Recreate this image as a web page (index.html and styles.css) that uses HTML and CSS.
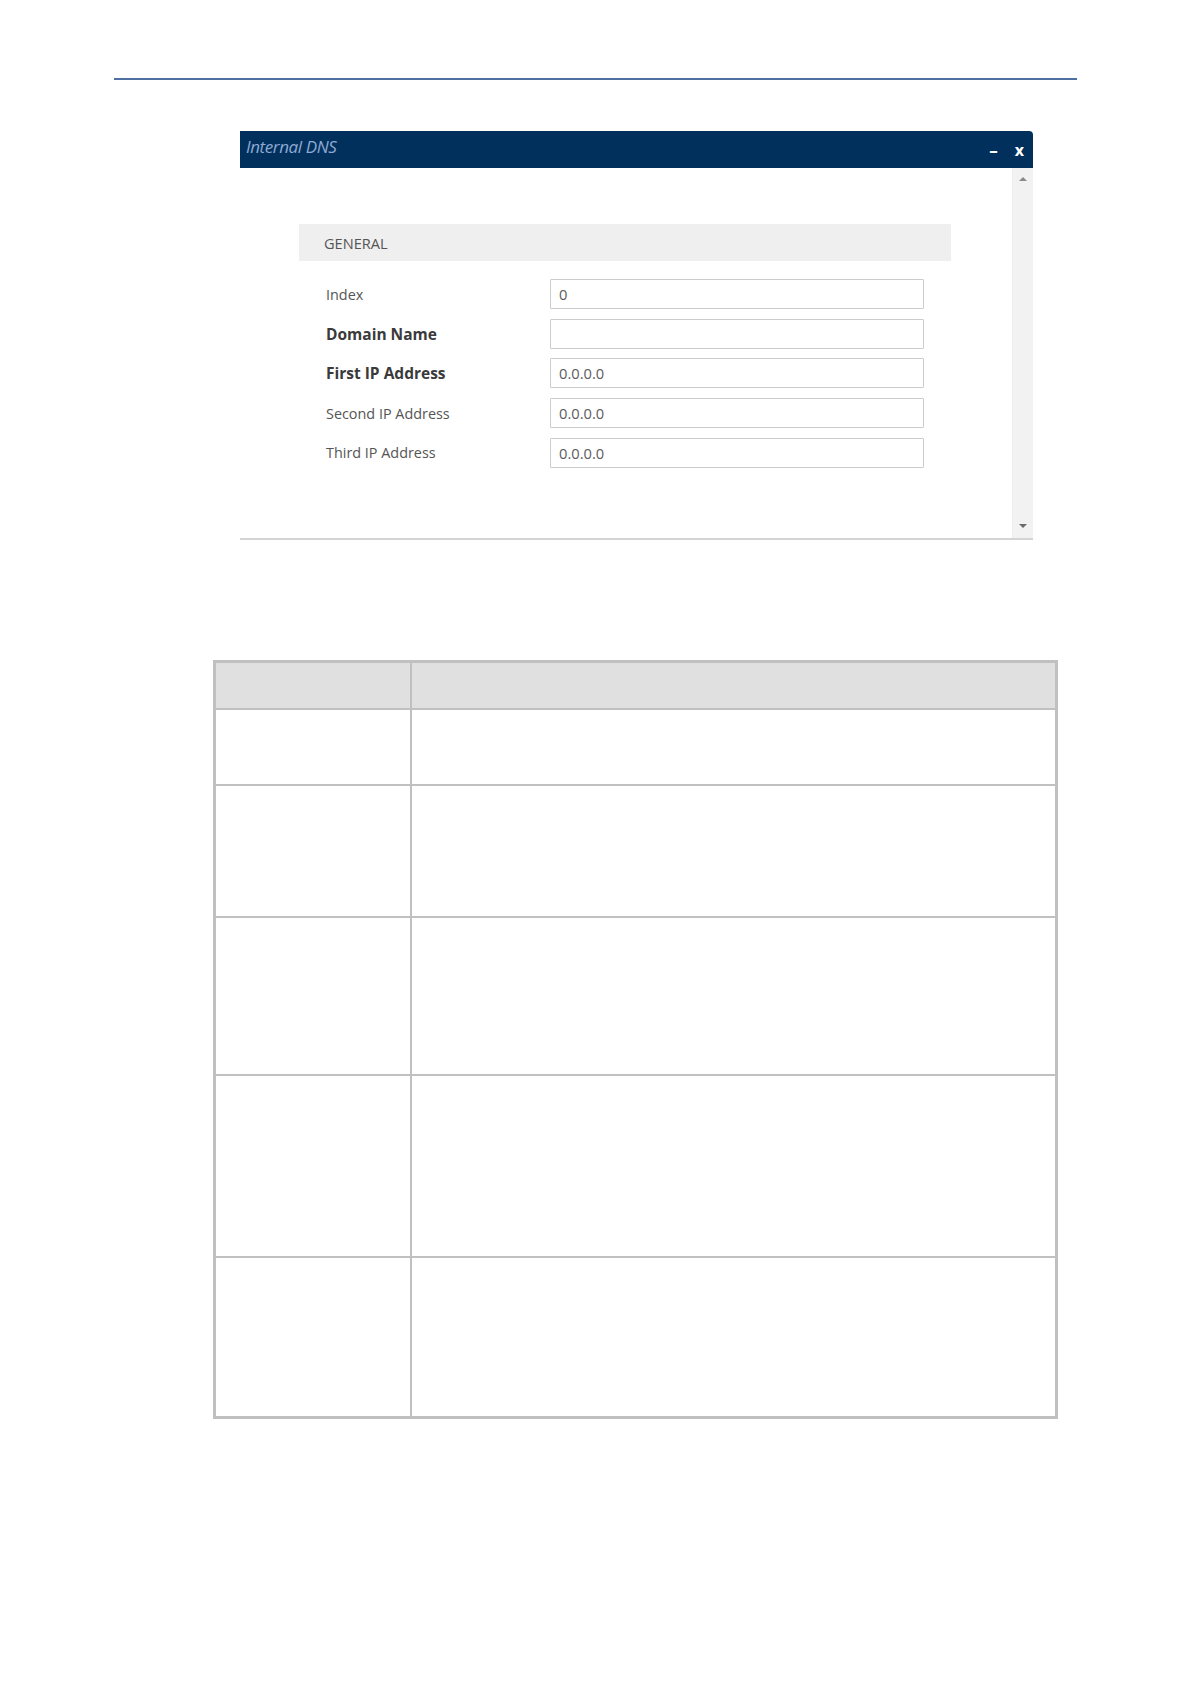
FILE: index.html
```html
<!DOCTYPE html>
<html lang="en">
<head>
<meta charset="utf-8">
<title>Internal DNS</title>
<link rel="stylesheet" href="styles.css">
</head>
<body>
<div class="page">
  <div class="rule"></div>

  <div class="dialog">
    <div class="titlebar">
      <span class="title">Internal DNS</span>
      <div class="controls">
        <span class="ctl min">&ndash;</span>
        <span class="ctl close">x</span>
      </div>
    </div>
    <div class="body">
      <div class="content">
        <div class="section">GENERAL</div>
        <div class="form">
          <div class="row"><label class="lbl">Index</label><div class="input">0</div></div>
          <div class="row"><label class="lbl bold">Domain Name</label><div class="input"></div></div>
          <div class="row"><label class="lbl bold">First IP Address</label><div class="input">0.0.0.0</div></div>
          <div class="row"><label class="lbl">Second IP Address</label><div class="input">0.0.0.0</div></div>
          <div class="row"><label class="lbl">Third IP Address</label><div class="input">0.0.0.0</div></div>
        </div>
      </div>
      <div class="scrollbar">
        <span class="arrow up"></span>
        <span class="arrow down"></span>
      </div>
    </div>
  </div>

  <table class="grid">
    <tr class="head"><th class="c1"></th><th class="c2"></th></tr>
    <tr class="r1"><td></td><td></td></tr>
    <tr class="r2"><td></td><td></td></tr>
    <tr class="r3"><td></td><td></td></tr>
    <tr class="r4"><td></td><td></td></tr>
    <tr class="r5"><td></td><td></td></tr>
  </table>
</div>
</body>
</html>
```

FILE: styles.css
```css
html, body {
  margin: 0;
  padding: 0;
  background: #ffffff;
}

.page {
  width: 1191px;
  height: 1684px;
  padding-top: 78px;
  box-sizing: border-box;
  font-family: "Open Sans", "Noto Sans", sans-serif;
}

.rule {
  margin-left: 114px;
  width: 963px;
  height: 2px;
  background: #4d70a1;
}

.dialog {
  margin-left: 240px;
  margin-top: 51px;
  width: 793px;
}

.titlebar {
  height: 37px;
  background: #02305d;
  border-top-right-radius: 4px;
  display: flex;
  align-items: center;
  justify-content: space-between;
  padding-left: 6px;
  padding-right: 9px;
}

.title {
  font-style: italic;
  font-size: 17px;
  color: #8eaad3;
  margin-top: -6px;
  letter-spacing: -0.4px;
}

.controls {
  display: flex;
  gap: 17px;
  margin-top: 2px;
}

.ctl {
  color: #ffffff;
  font-weight: 700;
  font-size: 16px;
  line-height: 1;
}

.ctl.min {
  font-size: 17px;
}

.body {
  height: 370px;
  display: flex;
  border-bottom: 2px solid #d4d4d4;
}

.content {
  flex: 1;
  padding-left: 59px;
  padding-right: 61px;
  padding-top: 56px;
}

.section {
  height: 37px;
  background: #efefef;
  color: #555555;
  font-size: 14.6px;
  display: flex;
  align-items: center;
  padding-left: 25px;
}

.form {
  display: flex;
  flex-direction: column;
  gap: 9.7px;
  padding-top: 18px;
  padding-left: 27px;
  padding-right: 27px;
}

.row {
  display: flex;
  align-items: center;
  height: 30px;
}

.lbl {
  width: 224px;
  font-size: 14.4px;
  color: #555555;
}

.lbl.bold {
  font-weight: 700;
  color: #3a3a3a;
  font-size: 15.5px;
}

.input {
  width: 374px;
  height: 30px;
  box-sizing: border-box;
  border: 1px solid #cccccc;
  border-radius: 1px;
  padding-left: 8px;
  font-size: 14.7px;
  color: #5b5b5b;
  display: flex;
  align-items: center;
}

.scrollbar {
  width: 20px;
  background: #f2f2f2;
  border-left: 1px solid #ececec;
  display: flex;
  flex-direction: column;
  justify-content: space-between;
  align-items: center;
  padding: 9px 0 10px;
}

.arrow {
  width: 0;
  height: 0;
  border-left: 4px solid transparent;
  border-right: 4px solid transparent;
}

.arrow.up {
  border-bottom: 4px solid #8a8a8a;
}

.arrow.down {
  border-top: 4px solid #6a6a6a;
}

.grid {
  margin-left: 213px;
  margin-top: 120px;
  width: 845px;
  border-collapse: collapse;
  border: 3px solid #c0c0c0;
}

.grid th,
.grid td {
  padding: 0;
  border: 2px solid #c0c0c0;
}

.grid .c1 {
  width: 194px;
}

.grid .head th {
  background: #e0e0e0;
  border-bottom-width: 1px;
}

.grid .head { height: 47px; }
.grid .r1 { height: 76px; }
.grid .r2 { height: 132px; }
.grid .r3 { height: 158px; }
.grid .r4 { height: 182px; }
.grid .r5 { height: 161px; }
```
